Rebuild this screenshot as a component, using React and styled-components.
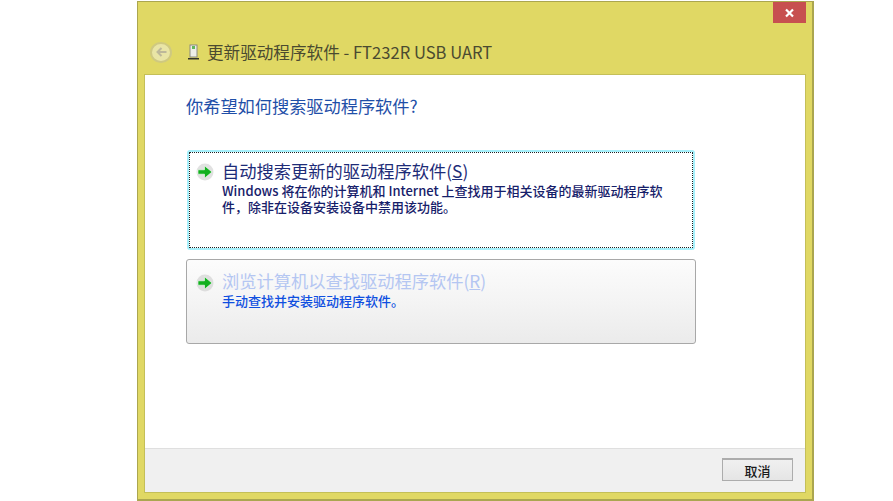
import React from "react";
import styled, { createGlobalStyle } from "styled-components";

const cjk = `"Noto Sans CJK SC", "Open Sans", sans-serif`;

const GlobalStyle = createGlobalStyle`
    html, body {
        margin: 0;
        padding: 0;
        background: #fff;
        overflow: hidden;
    }
`;

const Page = styled.div`
    width: 893px;
    height: 501px;
    padding: 1px 0 0 137px;
    box-sizing: border-box;
    font-family: ${cjk};
`;

const Dialog = styled.div`
    display: flex;
    flex-direction: column;
    width: 677px;
    height: 500px;
    box-sizing: border-box;
    background: #e0d864;
    border: 1px solid #aba64f;
    border-right-width: 2px;
    border-bottom-width: 2px;
`;

const CloseRow = styled.div`
    display: flex;
    justify-content: flex-end;
    height: 22px;
    padding-right: 6px;
`;

const CloseButton = styled.div`
    display: flex;
    align-items: center;
    justify-content: center;
    width: 33px;
    height: 21px;
    background: #c75050;
`;

const TitleBar = styled.div`
    display: flex;
    align-items: center;
    height: 51px;
    padding: 5px 0 0 12px;
    box-sizing: border-box;
`;

const BackButton = styled.div`
    display: flex;
    align-items: center;
    justify-content: center;
    width: 22px;
    height: 21px;
    margin-right: 15px;
    border-radius: 50%;
    box-sizing: border-box;
    border: 2px solid #cfc980;
    background: #e9e5a6;
`;

const DeviceIcon = styled.svg`
    width: 13px;
    height: 16px;
    margin-right: 7px;
`;

const Title = styled.div`
    font-size: 16.6px;
    line-height: 20px;
    color: #4a4a30;
    white-space: nowrap;
`;

const Client = styled.div`
    display: flex;
    flex-direction: column;
    flex: 1;
    margin: 0 7px 7px 7px;
    background: #fff;
    outline: 1px solid #c4bf58;
`;

const Content = styled.div`
    display: flex;
    flex-direction: column;
    flex: 1;
    padding: 20px 0 0 41px;
`;

const Heading = styled.div`
    font-size: 17.2px;
    line-height: 22px;
    color: #1f4fa8;
    margin-bottom: 33px;
`;

const OptionList = styled.div`
    display: flex;
    flex-direction: column;
    gap: 9px;
`;

const Option = styled.div`
    display: flex;
    width: ${(props) => (props.$hover ? "510px" : "508px")};
    height: ${(props) => (props.$hover ? "85px" : "100px")};
    margin-left: ${(props) => (props.$hover ? "0" : "1px")};
    box-sizing: border-box;
    padding: ${(props) => (props.$hover ? "10px 0 0 9px" : "8px 0 0 7px")};
    border-radius: 3px;
    border: ${(props) =>
        props.$hover ? "1px solid #a8a8a8" : "2px solid #a6f0fb"};
    outline: ${(props) => (props.$hover ? "none" : "1px dotted #222")};
    outline-offset: -3px;
    background: ${(props) =>
        props.$hover
            ? "linear-gradient(180deg, #fcfcfc 0%, #f4f4f4 50%, #ebebeb 100%)"
            : "#fff"};
`;

const ArrowIcon = styled.svg`
    width: 18px;
    height: 18px;
    margin: ${(props) => (props.$hover ? "4px" : "3px")} 8px 0 0;
    flex-shrink: 0;
`;

const OptionText = styled.div`
    display: flex;
    flex-direction: column;
`;

const OptionTitle = styled.div`
    font-size: 17.25px;
    line-height: 22px;
    color: ${(props) => (props.$hover ? "#b4c6f2" : "#1d2c78")};
    white-space: nowrap;
    u {
        text-underline-offset: 1px;
    }
`;

const OptionDesc = styled.div`
    font-size: 13px;
    line-height: 16px;
    font-weight: 500;
    color: ${(props) => (props.$hover ? "#0f4fe0" : "#16206a")};
    margin-top: 1px;
    white-space: nowrap;
`;

const Footer = styled.div`
    display: flex;
    align-items: center;
    justify-content: flex-end;
    height: 44px;
    padding: 0 12px 2px 0;
    box-sizing: border-box;
    background: #f0f0f0;
    border-top: 1px solid #dfdfdf;
`;

const CancelButton = styled.div`
    display: flex;
    align-items: center;
    justify-content: center;
    width: 71px;
    height: 23px;
    box-sizing: border-box;
    font-size: 13px;
    font-weight: 500;
    color: #1a1a1a;
    border: 1px solid #acacac;
    border-top-width: 2px;
    background: linear-gradient(180deg, #f0f0f0, #e5e5e5);
`;

const Arrow = ({ hover }) => (
    <ArrowIcon viewBox="0 0 18 18" $hover={hover}>
        <circle cx="9" cy="9" r="8.5" fill="#c8c8c8" opacity="0.55" />
        <path
            d="M2 6.8h6.5V2.8L16 9l-7.5 6.2v-4H2z"
            fill="#12b01e"
            stroke="#fff"
            strokeWidth="0.6"
        />
    </ArrowIcon>
);

export default function App() {
    return (
        <Page>
            <GlobalStyle />
            <Dialog>
                <CloseRow>
                    <CloseButton>
                        <svg width="11" height="10" viewBox="0 0 11 10">
                            <path
                                d="M2 1.5l7 7M9 1.5l-7 7"
                                stroke="#fff"
                                strokeWidth="2.2"
                            />
                        </svg>
                    </CloseButton>
                </CloseRow>
                <TitleBar>
                    <BackButton>
                        <svg width="13" height="12" viewBox="0 0 13 12">
                            <path
                                d="M11.5 6H2.5M6.5 2L2.5 6l4 4"
                                fill="none"
                                stroke="#bdb89a"
                                strokeWidth="2"
                            />
                        </svg>
                    </BackButton>
                    <DeviceIcon viewBox="0 0 13 16">
                        <rect x="3" y="1" width="7" height="12" fill="#eeeee8" stroke="#8c8c80" />
                        <rect x="5" y="2" width="3" height="3" fill="#62b85a" />
                        <rect x="1" y="14" width="11" height="1.5" fill="#33332a" />
                    </DeviceIcon>
                    <Title>更新驱动程序软件 - FT232R USB UART</Title>
                </TitleBar>
                <Client>
                    <Content>
                        <Heading>你希望如何搜索驱动程序软件?</Heading>
                        <OptionList>
                            <Option>
                                <Arrow />
                                <OptionText>
                                    <OptionTitle>
                                        自动搜索更新的驱动程序软件(<u>S</u>)
                                    </OptionTitle>
                                    <OptionDesc>
                                        Windows 将在你的计算机和 Internet 上查找用于相关设备的最新驱动程序软
                                        <br />
                                        件，除非在设备安装设备中禁用该功能。
                                    </OptionDesc>
                                </OptionText>
                            </Option>
                            <Option $hover>
                                <Arrow hover />
                                <OptionText>
                                    <OptionTitle $hover>
                                        浏览计算机以查找驱动程序软件(<u>R</u>)
                                    </OptionTitle>
                                    <OptionDesc $hover>手动查找并安装驱动程序软件。</OptionDesc>
                                </OptionText>
                            </Option>
                        </OptionList>
                    </Content>
                    <Footer>
                        <CancelButton>取消</CancelButton>
                    </Footer>
                </Client>
            </Dialog>
        </Page>
    );
}
